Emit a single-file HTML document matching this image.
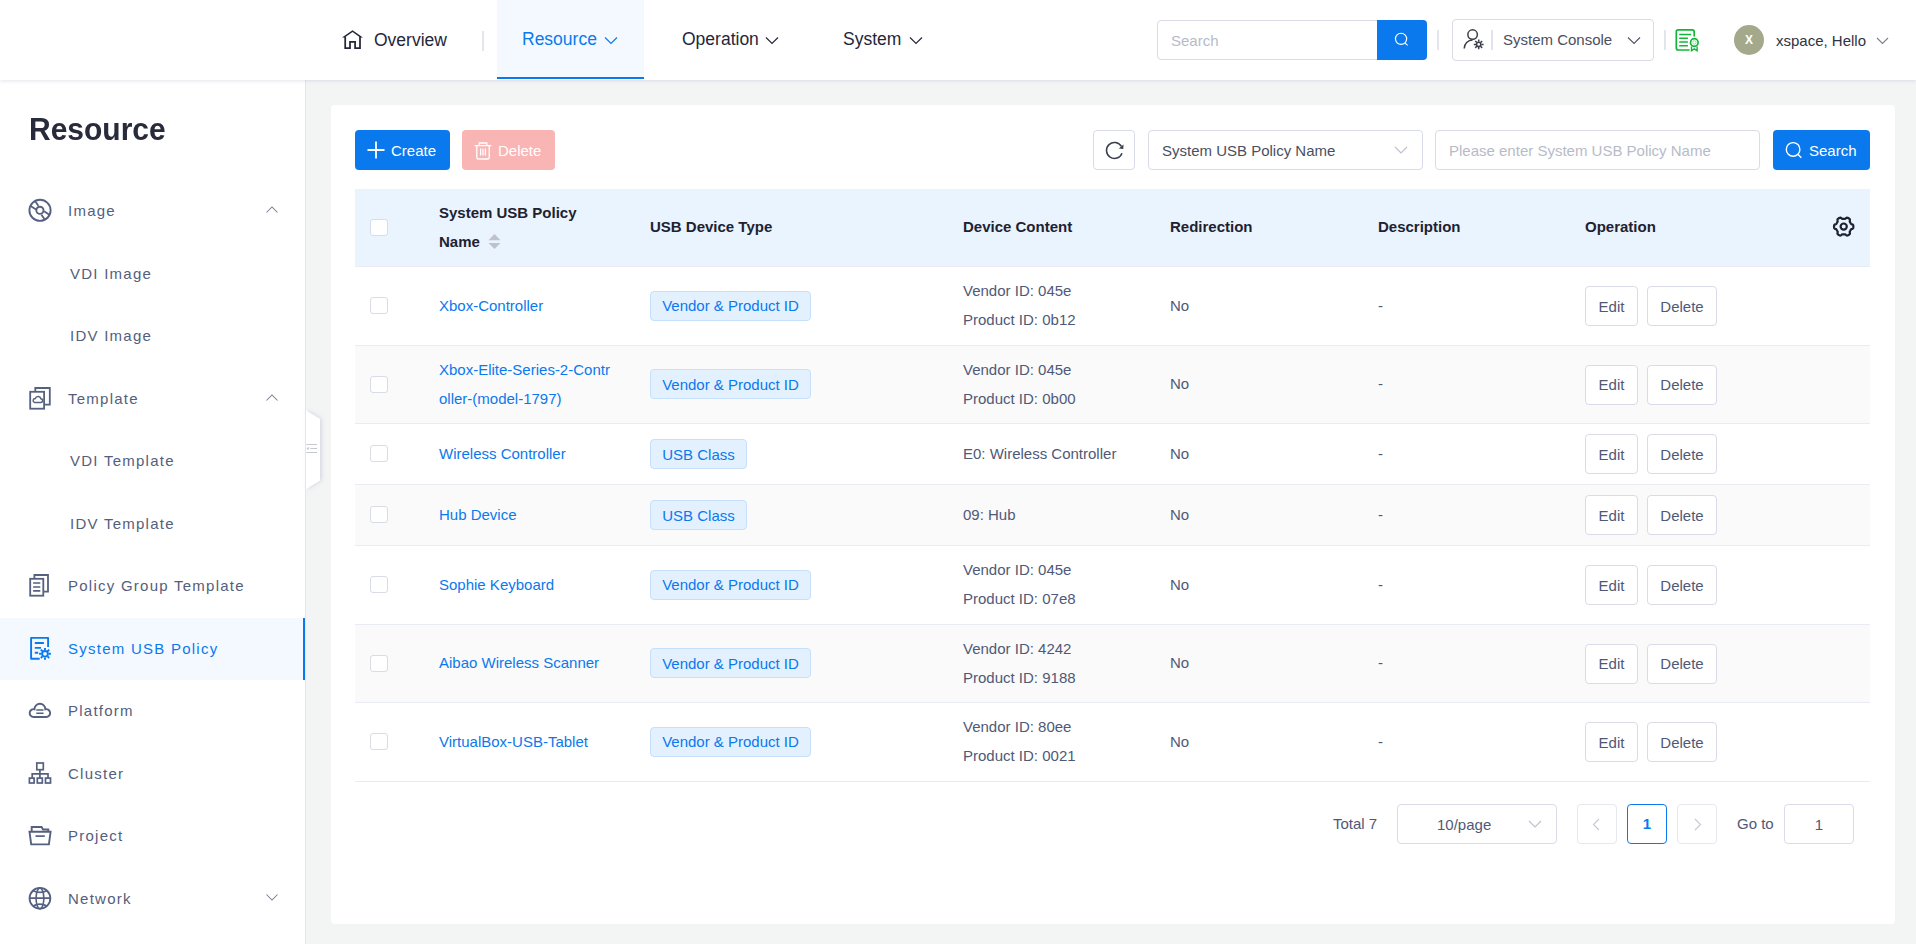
<!DOCTYPE html>
<html><head><meta charset="utf-8"><title>System USB Policy</title>
<style>
*{box-sizing:border-box;margin:0;padding:0}
html,body{width:1916px;height:944px;overflow:hidden}
body{position:relative;background:#f3f5f5;font-family:"Liberation Sans",sans-serif;font-size:15px;color:#4f5977;line-height:30px}
.abs,.t,.tag,.btn,.cb,.row,.line,.st,.sicon,.sactive,.box{position:absolute}
#header{position:absolute;left:0;top:0;width:1916px;height:80px;background:#fff;box-shadow:0 1px 4px rgba(40,50,90,.13);z-index:5}
#side{position:absolute;left:0;top:80px;width:306px;height:864px;background:#fff;border-right:1px solid #e3e6f0}
#card{position:absolute;left:331px;top:105px;width:1564px;height:819px;background:#fff;border-radius:4px}
.nav{position:absolute;top:24px;font-size:17.5px;line-height:30px;color:#23273a;white-space:nowrap}
.t{white-space:nowrap;line-height:30px;font-size:15px;color:#4f5977}
.link{color:#0a79ee}
.th{position:absolute;font-weight:bold;color:#1e2230;font-size:15px;white-space:nowrap;line-height:30px}
.row{left:355px;width:1515px;background:#fff}
.row.stripe{background:#fafafa}
.line{left:355px;width:1515px;height:1px;background:#e9ecf4}
.cb{left:370px;width:18px;height:17px;border:1px solid #d9dce7;border-radius:3px;background:#fff}
.tag{height:30px;line-height:28px;border:1px solid #c6e0fc;background:#e3f0fe;color:#0a79ee;border-radius:4px;text-align:center;font-size:15px;white-space:nowrap}
.btn{height:40px;line-height:40px;border:1px solid #d9dce8;background:#fff;color:#4f5977;border-radius:4px;text-align:center;font-size:15px}
.box{border:1px solid #d9dce8;border-radius:4px;background:#fff}
.st{font-size:15px;letter-spacing:1.25px;white-space:nowrap;line-height:30px}
.sicon{left:27px;line-height:0}
.sactive{left:0;width:305px;height:62px;background:#f3f9ff;border-right:2px solid #0a79ee}
.ph{color:#b7bbc8}
</style></head><body>

<div id="header">
 <svg class="abs" style="left:341px;top:29px" width="23" height="21" viewBox="0 0 23 21" fill="none"><path d="M0.960 8.580 L11.550 1.170 L21.930 8.580 L19.200 8.580 L11.550 3.100 L3.700 8.580 Z" fill="#23273a"/><path d="M4.200 8 V19.100 H9 V12.900 H14.100 V19.100 H19 V8" stroke="#23273a" stroke-width="1.750" stroke-linejoin="miter"/></svg>
 <div class="nav" style="left:374px;top:25px">Overview</div>
 <div class="abs" style="left:482px;top:31px;width:2px;height:20px;background:#e4e5ec"></div>
 <div class="abs" style="left:497px;top:0;width:147px;height:79px;background:#f4f9ff;border-bottom:2px solid #0a79ee"></div>
 <div class="nav" style="left:522px;color:#0a79ee">Resource</div>
 <svg class="abs" style="left:604px;top:36px" width="14" height="9" viewBox="0 0 14 9" fill="none" stroke="#0a79ee" stroke-width="1.15"><path d="M1 1.500 L7 7.500 L13 1.500"/></svg>
 <div class="nav" style="left:682px">Operation</div>
 <svg class="abs" style="left:765px;top:36px" width="14" height="9" viewBox="0 0 14 9" fill="none" stroke="#23273a" stroke-width="1.15"><path d="M1 1.500 L7 7.500 L13 1.500"/></svg>
 <div class="nav" style="left:843px">System</div>
 <svg class="abs" style="left:909px;top:36px" width="14" height="9" viewBox="0 0 14 9" fill="none" stroke="#23273a" stroke-width="1.15"><path d="M1 1.500 L7 7.500 L13 1.500"/></svg>

 <div class="box" style="left:1157px;top:20px;width:221px;height:40px;border-radius:4px 0 0 4px"></div>
 <div class="t ph" style="left:1171px;top:26px">Search</div>
 <div class="abs" style="left:1377px;top:20px;width:50px;height:40px;background:#0a79ee;border-radius:0 4px 4px 0"></div>
 <svg class="abs" style="left:1393px;top:31px" width="18" height="18" viewBox="0 0 18 18" fill="none" stroke="#fff" stroke-width="1.2"><circle cx="8.050" cy="7.850" r="5.600"/><path d="M12.100 12.100 L14.600 14.400"/></svg>
 <div class="abs" style="left:1437px;top:30px;width:2px;height:20px;background:#e4e5ec"></div>

 <div class="box" style="left:1452px;top:19px;width:202px;height:42px"></div>
 <svg class="abs" style="left:1463px;top:29px" width="23" height="22" viewBox="0 0 23 22" fill="none" stroke="#3c3f4a" stroke-width="1.5"><circle cx="9.600" cy="5.600" r="4.750"/><path d="M1.200 19.400 A8.500 8.500 0 0 1 9.600 10.900"/><circle cx="15.700" cy="15.400" r="2.100" stroke-width="1.500"/><path d="M18.40 15.40L20.60 15.40M17.61 17.31L19.16 18.86M15.70 18.10L15.70 20.30M13.79 17.31L12.24 18.86M13.00 15.40L10.80 15.40M13.79 13.49L12.24 11.94M15.70 12.70L15.70 10.50M17.61 13.49L19.16 11.94" stroke-width="1.500"/></svg>
 <div class="abs" style="left:1491px;top:30px;width:2px;height:20px;background:#e1e3ee"></div>
 <div class="t" style="left:1503px;top:25px;color:#4a4f60">System Console</div>
 <svg class="abs" style="left:1627px;top:36px" width="14" height="9" viewBox="0 0 14 9" fill="none" stroke="#555a6a" stroke-width="1.2"><path d="M1 1.500 L7 7.500 L13 1.500"/></svg>
 <div class="abs" style="left:1664px;top:30px;width:2px;height:20px;background:#e4e5ec"></div>

 <svg class="abs" style="left:1675px;top:28px" width="26" height="26" viewBox="0 0 26 26" fill="none" stroke="#10b637" stroke-width="1.7"><path d="M14.600 22 H3.300 A2 2 0 0 1 1.300 20 V3.800 A2 2 0 0 1 3.300 1.800 H17.200 A2 2 0 0 1 19.200 3.800 V8.500"/><path d="M4.200 6.600 H16.100 M4.200 10.300 H12.900 M4.200 13.900 H12.900 M4.200 17.800 H12.900" stroke-width="1.500"/><circle cx="19.300" cy="14.500" r="3.800"/><circle cx="19.300" cy="14.500" r="1.700" stroke-width="0.800" stroke="#7fd895"/><path d="M16.500 18.500 V22.600 L19.300 20.800 L22.100 22.600 V18.500" stroke-width="1.400"/></svg>

 <div class="abs" style="left:1734px;top:25px;width:30px;height:30px;border-radius:50%;background:#a4a98c;color:#fff;font-size:12px;font-weight:bold;text-align:center;line-height:31px">X</div>
 <div class="t" style="left:1776px;top:26px;color:#2f333f">xspace, Hello</div>
 <svg class="abs" style="left:1876px;top:37px" width="13" height="8" viewBox="0 0 13 8" fill="none" stroke="#7a7f8c" stroke-width="1.1"><path d="M1 1 L6.500 6.500 L12 1"/></svg>
</div>

<div id="side">
</div>
<div class="abs" style="left:29px;top:108px;font-size:30px;font-weight:bold;color:#272b3b;line-height:44px;transform:scaleY(1.07);transform-origin:0 32px">Resource</div>
<div class="sicon" style="top:197px"><svg width="26" height="26" viewBox="0 0 26 26" fill="none" stroke="#566080" stroke-width="1.9"><circle cx="13" cy="13.3" r="10.6"/><circle cx="12.9" cy="13.3" r="3.6"/><path d="M7.8 3.7 L11.4 8.8 M3.6 8.9 L9 12.4 M17.1 14.2 L22.3 17.8 M14.4 17.8 L17.8 22.6" stroke-width="1.8"/></svg></div>
<div class="st" style="left:68px;top:196px;color:#545e7d">Image</div>
<svg class="abs" style="left:265px;top:205px" width="14" height="9" viewBox="0 0 14 9" fill="none" stroke="#767d93" stroke-width="1.050"><path d="M1.500 7.500 L7 2 L12.500 7.500"/></svg>
<div class="st" style="left:70px;top:259px;color:#545e7d">VDI Image</div>
<div class="st" style="left:70px;top:321px;color:#545e7d">IDV Image</div>
<div class="sicon" style="top:385px"><svg width="26" height="26" viewBox="0 0 26 26" fill="none" stroke="#566080" stroke-width="1.8"><path d="M8.3 6.8 V3 H22.8 V19.6 H17.1"/><rect x="3.2" y="6.8" width="13.9" height="16.9"/><path d="M7.6 17.600 h6 a1.900 1.900 0 0 0 .3-3.800 a2.900 2.900 0 0 0-5.600-.3 a2.100 2.100 0 0 0-.7 4.100z" stroke-width="1.500"/></svg></div>
<div class="st" style="left:68px;top:384px;color:#545e7d">Template</div>
<svg class="abs" style="left:265px;top:393px" width="14" height="9" viewBox="0 0 14 9" fill="none" stroke="#767d93" stroke-width="1.050"><path d="M1.500 7.500 L7 2 L12.500 7.500"/></svg>
<div class="st" style="left:70px;top:446px;color:#545e7d">VDI Template</div>
<div class="st" style="left:70px;top:509px;color:#545e7d">IDV Template</div>
<div class="sicon" style="top:572px"><svg width="26" height="26" viewBox="0 0 26 26" fill="none" stroke="#566080" stroke-width="1.8"><path d="M7.4 6.8 V3 H21 V19.700 H16.3"/><rect x="3.2" y="6.8" width="13.1" height="16.9"/><path d="M6.100 11 h7.200 M6.100 15 h7.200 M6.100 18.900 h7.200" stroke-width="1.700"/></svg></div>
<div class="st" style="left:68px;top:571px;color:#545e7d">Policy Group Template</div>
<div class="sactive" style="top:618px"></div>
<div class="sicon" style="top:635px"><svg width="26" height="26" viewBox="0 0 26 26" fill="none" stroke="#0a79ee" stroke-width="1.9"><path d="M12.700 23.800 H4.100 V2.900 H21.100 V12" stroke-linejoin="round"/><path d="M7.800 8 H16.900 M7.800 12.900 H14 M7.800 17.800 H11.200" stroke-width="1.900"/><circle cx="18" cy="18.800" r="2.850"/><path d="M21.60 18.80L23.90 18.80M20.55 21.35L22.17 22.97M18.00 22.40L18.00 24.70M15.45 21.35L13.83 22.97M14.40 18.80L12.10 18.80M15.45 16.25L13.83 14.63M18.00 15.20L18.00 12.90M20.55 16.25L22.17 14.63" stroke-width="1.900"/></svg></div>
<div class="st" style="left:68px;top:634px;color:#0a79ee">System USB Policy</div>
<div class="sicon" style="top:697px"><svg width="26" height="26" viewBox="0 0 26 26" fill="none" stroke="#566080" stroke-width="1.9"><path d="M6.600 20.050 H19.200 A3.950 3.950 0 1 0 18.350 12.240 A5.450 5.450 0 0 0 7.450 12.240 A3.950 3.950 0 1 0 6.600 20.050 Z"/><path d="M9.300 13.100 H16.500 M9.300 16.200 H16.500" stroke-width="1.500"/></svg></div>
<div class="st" style="left:68px;top:696px;color:#545e7d">Platform</div>
<div class="sicon" style="top:760px"><svg width="26" height="26" viewBox="0 0 26 26" fill="none" stroke="#566080" stroke-width="1.700"><rect x="9.800" y="3" width="6.500" height="6.700"/><rect x="2.400" y="18.100" width="4.700" height="4.900"/><rect x="10.300" y="18.100" width="5" height="4.900"/><rect x="18.500" y="18.100" width="5" height="4.900"/><path d="M12.900 9.700 V18.100 M5.200 18.100 V13.800 H21 V18.100"/></svg></div>
<div class="st" style="left:68px;top:759px;color:#545e7d">Cluster</div>
<div class="sicon" style="top:822px"><svg width="26" height="26" viewBox="0 0 26 26" fill="none" stroke="#566080" stroke-width="1.9"><path d="M4.700 9.800 V5 H14.600 L16 7.500 H21.300 V9.800"/><path d="M2.500 9.800 H23.600 L21.900 22.400 H4.200 Z"/><path d="M8.500 14.100 H17.800" stroke-width="1.700"/></svg></div>
<div class="st" style="left:68px;top:821px;color:#545e7d">Project</div>
<div class="sicon" style="top:885px"><svg width="26" height="26" viewBox="0 0 26 26" fill="none" stroke="#566080" stroke-width="1.8"><circle cx="12.950" cy="13.350" r="10.400"/><ellipse cx="12.950" cy="13.350" rx="3.900" ry="10.400" stroke-width="1.600"/><path d="M2.600 13.100 H23.300 M5.900 5.700 Q12.950 9.100 20 5.700 M5.900 21 Q12.950 17.200 20 21" stroke-width="1.600"/></svg></div>
<div class="st" style="left:68px;top:884px;color:#545e7d">Network</div>
<svg class="abs" style="left:265px;top:893px" width="14" height="9" viewBox="0 0 14 9" fill="none" stroke="#767d93" stroke-width="1.050"><path d="M1.500 1.500 L7 7 L12.500 1.500"/></svg>

<!-- collapse handle -->
<svg class="abs" style="left:300px;top:400px;z-index:2" width="34" height="100" viewBox="0 0 34 100"><defs><filter id="hs" x="-50%" y="-20%" width="250%" height="140%"><feDropShadow dx="1.500" dy="0" stdDeviation="2.200" flood-color="#5a6490" flood-opacity=".22"/></filter></defs><path d="M6 10.500 L20 19 V80.500 L6 89z" fill="#fff" filter="url(#hs)"/><path d="M6.400 44.500 H17 M10.300 48.500 H17 M6.400 52.500 H17" stroke="#c5c8d0" stroke-width="1" fill="none"/><path d="M6.400 48.500 L8.800 46.800 V50.200z" fill="#c5c8d0"/></svg>
<div class="abs" style="left:305px;top:400px;width:1px;height:100px;background:#e3e6f0;z-index:3"></div>
<div id="card"></div>

<!-- toolbar -->
<div class="abs" style="left:355px;top:130px;width:95px;height:40px;background:#0a79ee;border-radius:4px"></div>
<svg class="abs" style="left:367px;top:141.400px" width="18" height="18" viewBox="0 0 18 18" stroke="#fff" stroke-width="1.8"><path d="M9 0.500v17 M0.500 9h17"/></svg>
<div class="t" style="left:391px;top:136px;color:#fff">Create</div>
<div class="abs" style="left:462px;top:130px;width:93px;height:40px;background:#f9b4b4;border-radius:4px"></div>
<svg class="abs" style="left:474px;top:141.500px" width="18" height="18" viewBox="0 0 18 18" fill="none" stroke="#fff" stroke-width="1.3"><path d="M0.500 3.600h17 M5.200 3.400V1h7.600v2.400 M2.800 3.800v11.600a1.600 1.600 0 0 0 1.600 1.600h9.200a1.600 1.600 0 0 0 1.600-1.600V3.800 M6.600 6.500v7 M9 6.500v7 M11.400 6.500v7"/></svg>
<div class="t" style="left:498px;top:136px;color:#fff">Delete</div>

<div class="box" style="left:1093px;top:130px;width:42px;height:40px"></div>
<svg class="abs" style="left:1104px;top:140px" width="21" height="21" viewBox="0 0 21 21" fill="none" stroke="#3a3e4a" stroke-width="1.5"><path d="M17.430 6.400 A8 8 0 1 0 18.020 13.140"/><path d="M19.500 4.400 L19.300 8.900 L14.900 8.600 Z" fill="#3a3e4a" stroke="none"/></svg>
<div class="box" style="left:1148px;top:130px;width:275px;height:40px"></div>
<div class="t" style="left:1162px;top:136px;color:#4a4f60">System USB Policy Name</div>
<svg class="abs" style="left:1394px;top:145.500px" width="14" height="9" viewBox="0 0 14 9" fill="none" stroke="#bfc3cf" stroke-width="1.2"><path d="M1 1 L7 7 L13 1"/></svg>
<div class="box" style="left:1435px;top:130px;width:325px;height:40px"></div>
<div class="t ph" style="left:1449px;top:136px">Please enter System USB Policy Name</div>
<div class="abs" style="left:1773px;top:130px;width:97px;height:40px;background:#0a79ee;border-radius:4px"></div>
<svg class="abs" style="left:1785px;top:141px" width="18" height="18" viewBox="0 0 18 18" fill="none" stroke="#fff" stroke-width="1.400"><circle cx="8.100" cy="8.400" r="6.800"/><path d="M12.900 13.300 L16.300 16.700"/></svg>
<div class="t" style="left:1809px;top:136px;color:#fff">Search</div>

<!-- table header -->
<div class="abs" style="left:355px;top:189px;width:1515px;height:77px;background:#eaf4fe"></div>
<div class="line" style="top:266px"></div>
<div class="cb" style="top:219px"></div>
<div class="th" style="left:439px;top:198px">System USB Policy</div>
<div class="th" style="left:439px;top:227px">Name</div>
<svg class="abs" style="left:487.500px;top:233px" width="13" height="18" viewBox="0 0 13 18"><path d="M6.500 1 L12.500 7.200 H.5z M6.500 16 L12.500 9.900 H.5z" fill="#bfc2cc"/></svg>
<div class="th" style="left:650px;top:212px">USB Device Type</div>
<div class="th" style="left:963px;top:212px">Device Content</div>
<div class="th" style="left:1170px;top:212px">Redirection</div>
<div class="th" style="left:1378px;top:212px">Description</div>
<div class="th" style="left:1585px;top:212px">Operation</div>
<svg class="abs" style="left:1831px;top:214px" width="26" height="26" viewBox="0 0 26 26" fill="none" stroke="#1e2230" stroke-width="2.200" stroke-linejoin="round"><path d="M22.35 12.60L22.34 13.02L22.30 13.44L22.23 13.85L22.08 14.25L21.74 14.61L21.10 14.85L20.46 15.05L20.10 15.29L19.89 15.58L19.73 15.88L19.58 16.18L19.41 16.47L19.24 16.77L19.06 17.05L18.88 17.34L18.73 17.66L18.70 18.10L18.85 18.75L18.96 19.43L18.82 19.90L18.55 20.23L18.23 20.50L17.88 20.74L17.52 20.96L17.15 21.16L16.77 21.34L16.38 21.48L15.96 21.55L15.49 21.43L14.95 21.00L14.46 20.54L14.07 20.35L13.72 20.32L13.38 20.33L13.04 20.34L12.70 20.35L12.36 20.34L12.02 20.33L11.68 20.32L11.33 20.35L10.94 20.54L10.45 21.00L9.91 21.43L9.44 21.55L9.02 21.48L8.63 21.34L8.25 21.16L7.88 20.96L7.52 20.74L7.17 20.50L6.85 20.23L6.58 19.90L6.44 19.43L6.55 18.75L6.70 18.10L6.67 17.66L6.52 17.34L6.34 17.05L6.16 16.77L5.99 16.48L5.82 16.18L5.67 15.88L5.51 15.58L5.30 15.29L4.94 15.05L4.30 14.85L3.66 14.61L3.32 14.25L3.17 13.85L3.10 13.44L3.06 13.02L3.05 12.60L3.06 12.18L3.10 11.76L3.17 11.35L3.32 10.95L3.66 10.59L4.30 10.35L4.94 10.15L5.30 9.91L5.51 9.62L5.67 9.32L5.82 9.02L5.99 8.72L6.16 8.43L6.34 8.15L6.52 7.86L6.67 7.54L6.70 7.10L6.55 6.45L6.44 5.77L6.58 5.30L6.85 4.97L7.17 4.70L7.52 4.46L7.87 4.24L8.25 4.04L8.63 3.86L9.02 3.72L9.44 3.65L9.91 3.77L10.45 4.20L10.94 4.66L11.33 4.85L11.68 4.88L12.02 4.87L12.36 4.86L12.70 4.85L13.04 4.86L13.38 4.87L13.72 4.88L14.07 4.85L14.46 4.66L14.95 4.20L15.49 3.77L15.96 3.65L16.38 3.72L16.77 3.86L17.15 4.04L17.52 4.24L17.88 4.46L18.23 4.70L18.55 4.97L18.82 5.30L18.96 5.77L18.85 6.45L18.70 7.10L18.73 7.54L18.88 7.86L19.06 8.15L19.24 8.43L19.41 8.73L19.58 9.02L19.73 9.32L19.89 9.62L20.10 9.91L20.46 10.15L21.10 10.35L21.74 10.59L22.08 10.95L22.23 11.35L22.30 11.76L22.34 12.18Z"/><circle cx="12.700" cy="12.600" r="3.100"/></svg>

<div class="row" style="top:267px;height:78px"></div>
<div class="line" style="top:345px"></div>
<div class="cb" style="top:297px"></div>
<div class="t link" style="left:439px;top:291px">Xbox-Controller</div>
<div class="tag" style="left:650px;top:291px;width:161px">Vendor &amp; Product ID</div>
<div class="t" style="left:963px;top:276px">Vendor ID: 045e</div>
<div class="t" style="left:963px;top:305px">Product ID: 0b12</div>
<div class="t" style="left:1170px;top:291px">No</div>
<div class="t" style="left:1378px;top:291px">-</div>
<div class="btn" style="left:1585px;top:286px;width:53px">Edit</div>
<div class="btn" style="left:1647px;top:286px;width:70px">Delete</div>
<div class="row stripe" style="top:346px;height:77px"></div>
<div class="line" style="top:423px"></div>
<div class="cb" style="top:376px"></div>
<div class="t link" style="left:439px;top:355px">Xbox-Elite-Series-2-Contr</div>
<div class="t link" style="left:439px;top:384px">oller-(model-1797)</div>
<div class="tag" style="left:650px;top:369px;width:161px;line-height:30px">Vendor &amp; Product ID</div>
<div class="t" style="left:963px;top:355px">Vendor ID: 045e</div>
<div class="t" style="left:963px;top:384px">Product ID: 0b00</div>
<div class="t" style="left:1170px;top:369px">No</div>
<div class="t" style="left:1378px;top:369px">-</div>
<div class="btn" style="left:1585px;top:365px;width:53px;line-height:38px">Edit</div>
<div class="btn" style="left:1647px;top:365px;width:70px;line-height:38px">Delete</div>
<div class="row" style="top:424px;height:60px"></div>
<div class="line" style="top:484px"></div>
<div class="cb" style="top:445px"></div>
<div class="t link" style="left:439px;top:439px">Wireless Controller</div>
<div class="tag" style="left:650px;top:439px;width:97px;line-height:30px">USB Class</div>
<div class="t" style="left:963px;top:439px">E0: Wireless Controller</div>
<div class="t" style="left:1170px;top:439px">No</div>
<div class="t" style="left:1378px;top:439px">-</div>
<div class="btn" style="left:1585px;top:434px;width:53px">Edit</div>
<div class="btn" style="left:1647px;top:434px;width:70px">Delete</div>
<div class="row stripe" style="top:485px;height:60px"></div>
<div class="line" style="top:545px"></div>
<div class="cb" style="top:506px"></div>
<div class="t link" style="left:439px;top:500px">Hub Device</div>
<div class="tag" style="left:650px;top:500px;width:97px;line-height:30px">USB Class</div>
<div class="t" style="left:963px;top:500px">09: Hub</div>
<div class="t" style="left:1170px;top:500px">No</div>
<div class="t" style="left:1378px;top:500px">-</div>
<div class="btn" style="left:1585px;top:495px;width:53px">Edit</div>
<div class="btn" style="left:1647px;top:495px;width:70px">Delete</div>
<div class="row" style="top:546px;height:78px"></div>
<div class="line" style="top:624px"></div>
<div class="cb" style="top:576px"></div>
<div class="t link" style="left:439px;top:570px">Sophie Keyboard</div>
<div class="tag" style="left:650px;top:570px;width:161px">Vendor &amp; Product ID</div>
<div class="t" style="left:963px;top:555px">Vendor ID: 045e</div>
<div class="t" style="left:963px;top:584px">Product ID: 07e8</div>
<div class="t" style="left:1170px;top:570px">No</div>
<div class="t" style="left:1378px;top:570px">-</div>
<div class="btn" style="left:1585px;top:565px;width:53px">Edit</div>
<div class="btn" style="left:1647px;top:565px;width:70px">Delete</div>
<div class="row stripe" style="top:625px;height:77px"></div>
<div class="line" style="top:702px"></div>
<div class="cb" style="top:655px"></div>
<div class="t link" style="left:439px;top:648px">Aibao Wireless Scanner</div>
<div class="tag" style="left:650px;top:648px;width:161px;line-height:30px">Vendor &amp; Product ID</div>
<div class="t" style="left:963px;top:634px">Vendor ID: 4242</div>
<div class="t" style="left:963px;top:663px">Product ID: 9188</div>
<div class="t" style="left:1170px;top:648px">No</div>
<div class="t" style="left:1378px;top:648px">-</div>
<div class="btn" style="left:1585px;top:644px;width:53px;line-height:38px">Edit</div>
<div class="btn" style="left:1647px;top:644px;width:70px;line-height:38px">Delete</div>
<div class="row" style="top:703px;height:78px"></div>
<div class="line" style="top:781px"></div>
<div class="cb" style="top:733px"></div>
<div class="t link" style="left:439px;top:727px">VirtualBox-USB-Tablet</div>
<div class="tag" style="left:650px;top:727px;width:161px">Vendor &amp; Product ID</div>
<div class="t" style="left:963px;top:712px">Vendor ID: 80ee</div>
<div class="t" style="left:963px;top:741px">Product ID: 0021</div>
<div class="t" style="left:1170px;top:727px">No</div>
<div class="t" style="left:1378px;top:727px">-</div>
<div class="btn" style="left:1585px;top:722px;width:53px">Edit</div>
<div class="btn" style="left:1647px;top:722px;width:70px">Delete</div>

<!-- pagination -->
<div class="t" style="left:1333px;top:809px">Total 7</div>
<div class="box" style="left:1397px;top:804px;width:160px;height:40px"></div>
<div class="t" style="left:1437px;top:810px">10/page</div>
<svg class="abs" style="left:1528px;top:820px" width="14" height="9" viewBox="0 0 14 9" fill="none" stroke="#bfc3cf" stroke-width="1.2"><path d="M1 1 L7 7 L13 1"/></svg>
<div class="box" style="left:1577px;top:804px;width:40px;height:40px;border-color:#e6e8f0"></div>
<svg class="abs" style="left:1592px;top:818px" width="9" height="13" viewBox="0 0 9 13" fill="none" stroke="#c5c8d3" stroke-width="1.1"><path d="M7 1 L1.500 6.500 L7 12"/></svg>
<div class="box" style="left:1627px;top:804px;width:40px;height:40px;border-color:#0a79ee"></div>
<div class="t" style="left:1627px;top:809px;width:40px;text-align:center;color:#0a79ee;font-weight:bold">1</div>
<div class="box" style="left:1677px;top:804px;width:40px;height:40px;border-color:#e6e8f0"></div>
<svg class="abs" style="left:1693px;top:818px" width="9" height="13" viewBox="0 0 9 13" fill="none" stroke="#c5c8d3" stroke-width="1.1"><path d="M2 1 L7.500 6.500 L2 12"/></svg>
<div class="t" style="left:1737px;top:809px">Go to</div>
<div class="box" style="left:1784px;top:804px;width:70px;height:40px"></div>
<div class="t" style="left:1784px;top:810px;width:70px;text-align:center">1</div>

</body></html>
